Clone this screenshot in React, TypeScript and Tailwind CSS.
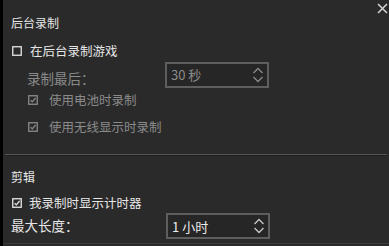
import React from "react";

function Box({ checked, dim }: { checked?: boolean; dim?: boolean }) {
  const c = dim ? "#8a8a8a" : "#e6e6e6";
  return (
    <svg width="10" height="10" viewBox="0 0 10 10" className="shrink-0">
      <rect x="0.75" y="0.75" width="8.5" height="8.5" fill="none" stroke={c} strokeWidth="1.3" />
      {checked && <path d="M2.6 5.2 L4.3 6.9 L7.6 3" fill="none" stroke={c} strokeWidth="1.3" />}
    </svg>
  );
}

function Spin({ dim }: { dim?: boolean }) {
  const c = dim ? "#8a8a8a" : "#c8c8c8";
  return (
    <svg width="14" height="18" viewBox="0 0 14 18" className="shrink-0">
      <path d="M2.5 7 L7 2.5 L11.5 7" fill="none" stroke={c} strokeWidth="1.3" />
      <path d="M2.5 11 L7 15.5 L11.5 11" fill="none" stroke={c} strokeWidth="1.3" />
    </svg>
  );
}

function Select({ value, dim }: { value: string; dim?: boolean }) {
  return (
    <div className="flex h-[26px] w-[104px] items-center border-2 border-[#5e5e5e] bg-[#262626] pl-[4px] pr-[2px] text-[13px]">
      <span className={dim ? "text-[#8a8a8a]" : "text-[#ececec]"}>{value}</span>
      <div className="ml-auto">
        <Spin dim={dim} />
      </div>
    </div>
  );
}

export default function App() {
  return (
    <div
      className="relative h-[246px] w-[389px] overflow-hidden border-l-[3px] border-black bg-[#2a2a2a] text-[12.5px] leading-none text-[#e6e6e6]"
      style={{ fontFamily: '"Noto Sans CJK SC", "Noto Sans", sans-serif' }}
    >
      {/* close */}
      <svg className="absolute right-[1px] top-[3px]" width="11" height="11" viewBox="0 0 11 11">
        <path d="M1 1 L10 10 M10 1 L1 10" stroke="#d0d0d0" strokeWidth="1.6" />
      </svg>

      <div className="pl-[8px] pt-[17px]">
        <div className="text-[12px]">后台录制</div>

        <div className="mt-[16px] flex items-center gap-[8px] pl-[1px]">
          <Box />
          <span>在后台录制游戏</span>
        </div>

        <div className="mt-[4px] flex items-start">
          <div className="w-[154px] pl-[16px] pt-[10px] text-[13.5px] text-[#8a8a8a]">录制最后：</div>
          <Select value="30 秒" dim />
        </div>

        <div className="mt-[6px] flex items-center gap-[11px] pl-[17px] text-[12.5px] text-[#8a8a8a]">
          <Box checked dim />
          <span>使用电池时录制</span>
        </div>

        <div className="mt-[15px] flex items-center gap-[11px] pl-[17px] text-[12.5px] text-[#8a8a8a]">
          <Box checked dim />
          <span>使用无线显示时录制</span>
        </div>
      </div>

      <div className="mx-[2px] mt-[20px] border-t border-[#555] border-b border-b-[#202020]" />

      <div className="pl-[8px] pt-[15px]">
        <div className="text-[12px]">剪辑</div>

        <div className="mt-[14px] flex items-center gap-[7px] pl-[1px]">
          <Box checked />
          <span>我录制时显示计时器</span>
        </div>

        <div className="mt-[4px] flex items-center">
          <div className="w-[155px] text-[13.5px]">最大长度：</div>
          <Select value="1 小时" />
        </div>
      </div>

      <div className="absolute bottom-[2px] left-0 right-0 border-t border-[#3a3a3a]" />
    </div>
  );
}
